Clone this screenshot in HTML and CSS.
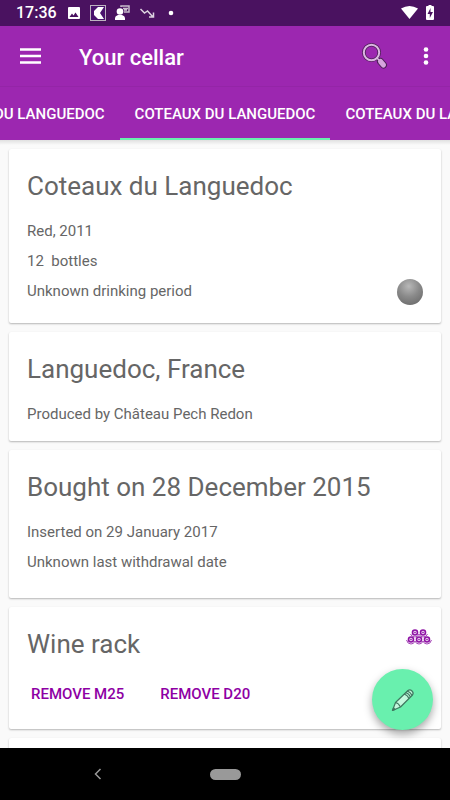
FILE: index.html
```html
<!DOCTYPE html>
<html lang="en">
<head>
<meta charset="utf-8">
<meta name="viewport" content="width=device-width, initial-scale=1">
<title>Your cellar</title>
<link rel="stylesheet" href="styles.css">
</head>
<body>
<div class="status">
  <span class="clock">17:36</span>
  <svg class="status-icons" width="112" height="18" viewBox="0 0 112 18" aria-hidden="true">
    <path fill="#fff" fill-rule="evenodd" d="M2 3h10q1 0 1 1v10q0 1-1 1H2q-1 0-1-1V4q0-1 1-1zM2.500 13h9L8.500 8.500l-2 3L5 9.500z"/>
    <rect x="23.500" y="1.500" width="15" height="15" fill="#4a148c" fill-opacity=".3" stroke="#bdb3c0"/>
    <path fill="#fff" d="M31 3h6l-4 6 4 6h-6l-4-4V7z"/>
    <path fill="none" stroke="#c9bdcc" stroke-width="1.500" d="M54 3V2h8v6h-5M56 4.500h5M57 6h3"/>
    <circle cx="53" cy="7.500" r="3.300" fill="#fff"/>
    <path fill="#fff" d="M48 16v-2q0-2 3-3h4q3 1 3 3v2z"/>
    <path fill="none" stroke="#ddd3e0" stroke-width="1.500" d="M73.500 5l4 4 3-2 5.500 6M82 13h4.500V8.500"/>
    <circle cx="104" cy="9" r="2.300" fill="#fff"/>
  </svg>
  <svg class="status-right" width="36" height="18" viewBox="0 0 36 18" aria-hidden="true">
    <path fill="#fff" d="M1 4.500Q9.500-.500 18 4.500L9.500 15z"/>
    <path fill="#fff" d="M27 2h1.500V1h3v1H33q1 0 1 1v12q0 1-1 1h-6q-1 0-1-1V3q0-1 1-1z"/>
    <path fill="#4a1260" d="M30.500 4L27.500 10h2.300v4L33 8h-2.500z"/>
  </svg>
</div>
<header class="appbar">
  <button class="icon-button" aria-label="Menu">
    <svg width="22" height="16" viewBox="0 0 22 16"><path fill="none" stroke="#fff" stroke-width="2.400" d="M0 1.500h21M0 8h21M0 14.500h21"/></svg>
  </button>
  <h1 class="app-title">Your cellar</h1>
  <button class="icon-button search" aria-label="Search">
    <svg width="26" height="26" viewBox="0 0 26 26">
      <circle cx="9.500" cy="9.500" r="7.700" fill="none" stroke="#4d2057" stroke-width="3.600"/>
      <path stroke="#4d2057" stroke-width="3" d="M14.500 14.500l3 3"/>
      <path stroke="#4d2057" stroke-width="7" stroke-linecap="round" d="M18.500 18.500l3 3.500"/>
      <circle cx="9.500" cy="9.500" r="7.700" fill="none" stroke="#dcb6e2" stroke-width="2"/>
      <path stroke="#dcb6e2" stroke-width="1.500" d="M14.500 14.500l3 3"/>
      <path stroke="#d6a5dd" stroke-width="5" stroke-linecap="round" d="M18.500 18.500l3 3.500"/>
    </svg>
  </button>
  <button class="icon-button" aria-label="More options">
    <svg width="6" height="20" viewBox="0 0 6 20" fill="#fff"><circle cx="3" cy="3.500" r="2.300"/><circle cx="3" cy="10" r="2.300"/><circle cx="3" cy="16.500" r="2.300"/></svg>
  </button>
</header>
<nav class="tabs">
  <a class="tab" href="#previous">COTEAUX DU LANGUEDOC</a>
  <a class="tab active" href="#current" aria-current="page">COTEAUX DU LANGUEDOC</a>
  <a class="tab" href="#next">COTEAUX DU LANGUEDOC</a>
</nav>
<main class="content">
  <section class="card card-wine">
    <h2>Coteaux du Languedoc</h2>
    <p>Red, 2011</p>
    <p class="bottles">12  bottles</p>
    <p class="period">Unknown drinking period <span class="ball"></span></p>
  </section>
  <section class="card">
    <h2>Languedoc, France</h2>
    <p>Produced by Château Pech Redon</p>
  </section>
  <section class="card card-dates">
    <h2>Bought on 28 December 2015</h2>
    <p>Inserted on 29 January 2017</p>
    <p>Unknown last withdrawal date</p>
  </section>
  <section class="card">
    <div class="card-head">
      <h2>Wine rack</h2>
      <svg class="rack" width="26" height="16" viewBox="0 0 26 16" aria-hidden="true">
        <g fill="#ecd3f0" stroke="#8e12a4" stroke-width="1.600"><circle cx="9" cy="3.500" r="2.500"/><circle cx="17" cy="3.500" r="2.500"/><circle cx="5" cy="10.500" r="2.500"/><circle cx="13" cy="10.500" r="2.500"/><circle cx="21" cy="10.500" r="2.500"/></g>
        <g fill="#8e12a4"><circle cx="9" cy="3.500" r=".8"/><circle cx="17" cy="3.500" r=".8"/><circle cx="5" cy="10.500" r=".8"/><circle cx="13" cy="10.500" r=".8"/><circle cx="21" cy="10.500" r=".8"/></g>
        <path fill="none" stroke="#a443b5" d="M.500 11q1 4 4.500 4 3 0 4-3 1 3 4 3t4-3q1 3 4 3 3.500 0 4.500-4M4.500 5q1 3 4.500 3 3 0 4-3 1 3 4 3 3.500 0 4.500-3"/>
      </svg>
    </div>
    <div class="actions">
      <button>REMOVE M25</button>
      <button>REMOVE D20</button>
    </div>
  </section>
  <section class="card"></section>
  <button class="fab" aria-label="Edit">
    <svg width="24" height="24" viewBox="0 0 24 24" fill="#c5f8de" stroke="#3f7960" stroke-width="1.200" stroke-linejoin="round">
      <path d="M1.500 22.500l3-8L17 2.500q2-1.500 4 .5t.500 4L9.500 19z"/>
      <path fill="none" d="M4.500 14.500q3 .5 5 4.500M13 6q3.500 1 5 4.500M14.500 4.500q3.500 1 5 4.500M16 3q3.500 1 5 4.500"/>
      <path fill="#3f7960" d="M1.500 22.500l1-2.500 1.500 1.500z"/>
    </svg>
  </button>
</main>
<footer class="system-nav">
  <button class="back" aria-label="Back"><svg width="8" height="12" viewBox="0 0 8 12"><path fill="none" stroke="#999" stroke-width="1.500" d="M6.500 1l-5 5 5 5"/></svg></button>
  <button class="home" aria-label="Home"></button>
</footer>
</body>
</html>
```
FILE: styles.css
```css
* { box-sizing: border-box; }
body {
  margin: 0;
  height: 100vh;
  display: flex;
  flex-direction: column;
  overflow: hidden;
  background: #fafafa;
  color: #666;
  font-family: Roboto, "Liberation Sans", sans-serif;
  font-size: 15px;
}
button {
  font: inherit;
  border: 0;
  padding: 0;
  background: none;
  cursor: pointer;
}
svg { display: block; }
h1, h2, p { margin: 0; }

.status {
  flex: none;
  height: 26px;
  display: flex;
  align-items: center;
  padding: 0 14px 0 16px;
  background: #4a1260;
  color: #fff;
}
.clock { font-size: 16px; font-weight: 500; line-height: 28px; }
.status-icons { margin-left: 10px; }
.status-right { margin-left: auto; }

.appbar {
  flex: none;
  height: 61px;
  display: flex;
  align-items: center;
  padding: 0 21px 0 20px;
  background: #9c27b0;
  border-bottom: 1px solid #9425a7;
}
.icon-button { flex: none; }
.app-title {
  margin-left: 37px;
  color: #fff;
  font-size: 22px;
  font-weight: 500;
  line-height: 30px;
  padding-top: 3px;
}
.search { margin-left: auto; margin-right: 35px; }

.tabs {
  flex: none;
  position: relative;
  z-index: 1;
  height: 53px;
  display: flex;
  justify-content: center;
  overflow: hidden;
  background: #9c27b0;
}
.tab {
  flex: none;
  padding: 0 15px;
  border-bottom: 2px solid transparent;
  color: #fff;
  font-weight: 500;
  line-height: 54px;
  text-decoration: none;
  white-space: nowrap;
}
.tab.active { border-color: #69f0ae; }

.content {
  flex: 1;
  min-height: 0;
  position: relative;
  overflow: hidden;
  display: flex;
  flex-direction: column;
  gap: 9px;
  padding: 9px 9px 0;
  background: linear-gradient(#e0e0e0, #fafafa 5px);
}
.card {
  flex: none;
  padding: 19px 18px 17px;
  background: #fff;
  border-radius: 2px;
  box-shadow: 0 1px 2px rgba(0, 0, 0, .28);
}
.card h2 {
  margin-bottom: 12px;
  font-size: 26px;
  font-weight: 400;
  line-height: 36px;
}
.card p { line-height: 30px; }
.card p:last-child { margin-bottom: -5px; }
.card-wine { min-height: 174px; }
.card-dates { min-height: 148px; }
.bottles { white-space: pre; }
.period { display: flex; justify-content: space-between; }
.ball {
  width: 26px;
  height: 26px;
  margin-top: 3px;
  border-radius: 50%;
  background: radial-gradient(circle at 45% 28%, #b8b8b8, #8a8a8a 45%, #707070 80%);
}
.card-head {
  display: flex;
  justify-content: space-between;
}
.rack { margin: 3px -9px 0 0; }
.actions {
  display: flex;
  gap: 36px;
  padding: 2px 4px 0;
}
.actions button {
  color: #8e00a4;
  font-weight: 500;
  line-height: 36px;
}
.fab {
  position: absolute;
  right: 17px;
  bottom: 18px;
  width: 61px;
  height: 61px;
  display: grid;
  place-items: center;
  border-radius: 50%;
  background: #69f0ae;
  box-shadow: 0 4px 9px rgba(0, 0, 0, .35);
}

.system-nav {
  flex: none;
  height: 52px;
  display: grid;
  grid-template-columns: 1fr auto 1fr;
  align-items: center;
  background: #000;
}
.back { justify-self: center; margin-right: 14px; }
.home {
  width: 31px;
  height: 11px;
  border-radius: 6px;
  background: #999;
}
```
